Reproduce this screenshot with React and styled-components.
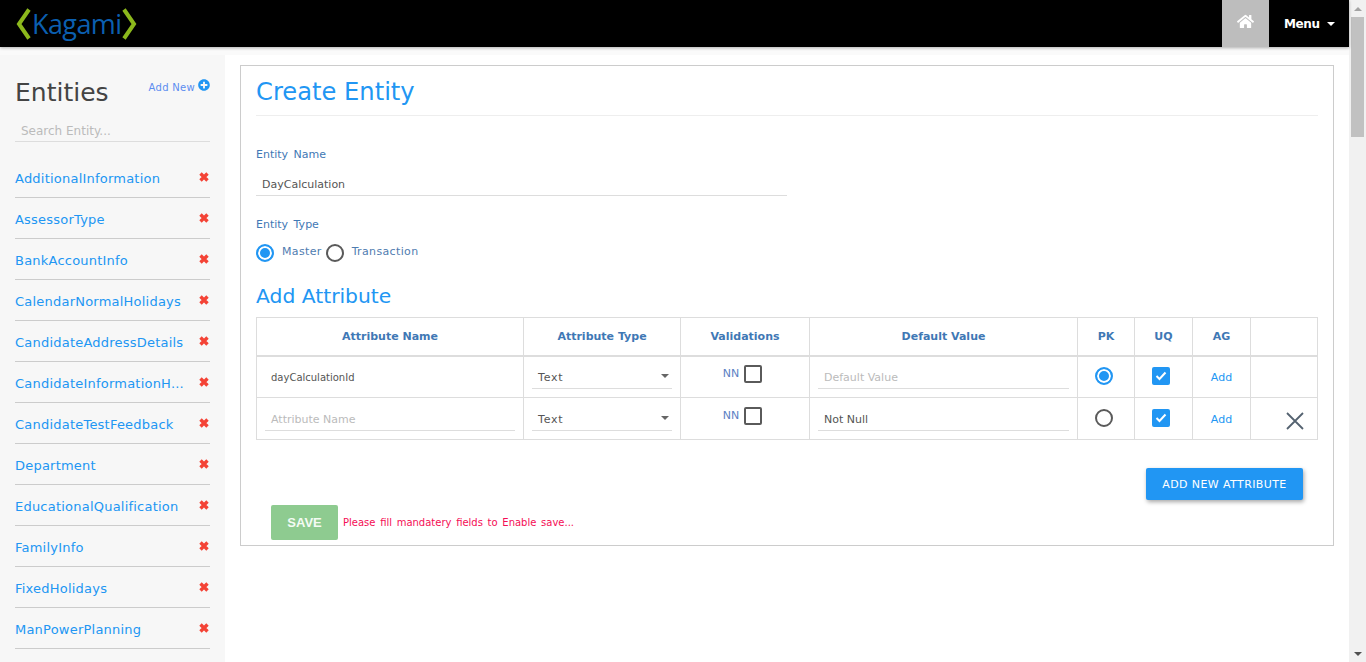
import React from 'react'
import styled, { createGlobalStyle } from 'styled-components'
import { FaHome, FaPlusCircle } from 'react-icons/fa'

const GlobalStyle = createGlobalStyle`
  html, body {
    margin: 0;
    padding: 0;
    background: #fff;
  }
  body {
    font-family: 'DejaVu Sans', Verdana, sans-serif;
    font-size: 12px;
    color: #555;
  }
  * {
    box-sizing: border-box;
  }
`

const Shell = styled.div`
  display: flex;
  height: 100vh;
  overflow: hidden;
`

const Viewport = styled.div`
  flex: 1;
  min-width: 0;
  display: flex;
  flex-direction: column;
`

const ScrollRail = styled.div`
  width: 17px;
  flex-shrink: 0;
  background: #f1f1f1;
  display: flex;
  flex-direction: column;
  justify-content: space-between;
  align-items: center;
`

const ScrollArrow = styled.div`
  height: 17px;
  display: flex;
  align-items: center;
  justify-content: center;

  &::after {
    content: '';
    border-left: 4px solid transparent;
    border-right: 4px solid transparent;
    border-${(p) => (p.$down ? 'top' : 'bottom')}: 4px solid ${(p) => (p.$down ? '#505050' : '#a3a3a3')};
  }
`

const ScrollThumb = styled.div`
  width: 13px;
  height: 120px;
  background: #c1c1c1;
  margin-bottom: auto;
`

const TopBar = styled.header`
  height: 47px;
  flex-shrink: 0;
  background: #000;
  display: flex;
  align-items: stretch;
  justify-content: space-between;
  box-shadow: 0 1px 3px rgba(0, 0, 0, 0.3);
  position: relative;
`

const Logo = styled.div`
  display: flex;
  align-items: center;
  gap: 1px;
  padding-left: 16px;
  color: #0b5fb0;
  font-family: 'Open Sans', sans-serif;
  font-weight: 500;
  font-size: 27px;
  letter-spacing: -0.6px;
`

const TopNav = styled.nav`
  display: flex;
`

const HomeLink = styled.a`
  width: 47px;
  background: #bdbdbd;
  color: #fff;
  display: flex;
  justify-content: center;
  padding-top: 13px;
  font-size: 17px;
`

const MenuLink = styled.a`
  width: 80px;
  color: #fff;
  font-weight: bold;
  font-size: 12px;
  letter-spacing: -0.4px;
  display: flex;
  align-items: center;
  gap: 7px;
  padding-left: 15px;
`

const Caret = styled.span`
  border-left: 4px solid transparent;
  border-right: 4px solid transparent;
  border-top: 4px solid #fff;
`

const Page = styled.div`
  flex: 1;
  display: flex;
  padding-top: 8px;
  background: linear-gradient(#fafafa 8px, #fff 8px);
`

const Sidebar = styled.aside`
  width: 225px;
  flex-shrink: 0;
  background: #f7f7f7;
  padding: 0 15px;
`

const SideHead = styled.div`
  display: flex;
  justify-content: space-between;
  height: 60px;
  padding-top: 20px;
`

const SideTitle = styled.h2`
  margin: 1px 0 0;
  font-size: 25px;
  line-height: 34px;
  font-weight: normal;
  color: #444;
`

const AddNew = styled.a`
  display: flex;
  gap: 3px;
  color: #5c8df0;
  font-size: 10px;
  line-height: 18px;
  margin-top: 4px;
  letter-spacing: 0.3px;

  svg {
    color: #2196f3;
    font-size: 12px;
  }
`

const SearchBox = styled.input`
  display: block;
  width: 100%;
  height: 27px;
  border: 0;
  border-bottom: 1px solid #ddd;
  background: transparent;
  padding: 5px 6px 0;
  font: 12px 'DejaVu Sans', sans-serif;
  outline: none;

  &::placeholder {
    color: #bbb;
    opacity: 1;
  }
`

const EntityList = styled.ul`
  list-style: none;
  margin: 15px 0 0;
  padding: 0;
`

const EntityRow = styled.li`
  height: 41px;
  border-bottom: 1px solid #ccc;
  display: flex;
  align-items: center;
  justify-content: space-between;
  color: #2196f3;
  font-size: 13px;
  letter-spacing: 0.22px;
  padding-top: 3px;

  svg {
    margin-top: -3px;
  }
`

const Main = styled.main`
  flex: 1;
  min-width: 0;
  padding: 10px 15px 0;
`

const Card = styled.section`
  height: 481px;
  border: 1px solid #ccc;
  padding: 0 15px;
`

const Title = styled.h1`
  margin: 0;
  height: 50px;
  border-bottom: 1px solid #eee;
  padding-top: 9px;
  font-size: 24.2px;
  line-height: 34px;
  font-weight: normal;
  color: #2196f3;
`

const FieldLabel = styled.label`
  display: block;
  color: #3f78b5;
  font-size: 11px;
  line-height: 14px;
  margin-top: ${(p) => p.$top}px;
  word-spacing: 2px;
`

const NameInput = styled.div`
  width: 531px;
  height: 24px;
  margin-top: 10px;
  padding-left: 6px;
  border-bottom: 1px solid #ddd;
  font-size: 11px;
  line-height: 25px;
  color: #555;
`

const RadioRow = styled.div`
  display: flex;
  align-items: center;
  height: 20px;
  margin-top: 11px;
`

const RadioText = styled.span`
  color: #4f7cb0;
  font-size: 11px;
  letter-spacing: 0.35px;
  margin: -4px 4px 0 8px;
`

const Radio = styled.span`
  display: inline-block;
  width: 18px;
  height: 18px;
  border-radius: 50%;
  border: 2px solid ${(p) => (p.$on ? '#2196f3' : '#5a5a5a')};
  background: ${(p) => (p.$on ? '#2196f3' : '#fff')};
  box-shadow: ${(p) => (p.$on ? 'inset 0 0 0 2px #fff' : 'none')};
`

const SubTitle = styled.h3`
  margin: 19px 0 0;
  font-size: 20.3px;
  line-height: 28px;
  font-weight: normal;
  color: #2196f3;
`

const Table = styled.table`
  width: 1061px;
  margin-top: 7px;
  border-collapse: collapse;
  table-layout: fixed;
`

const Th = styled.th`
  height: 38px;
  border: 1px solid #ddd;
  border-bottom-width: 2px;
  color: #3f78b5;
  font-size: 11px;
  font-weight: bold;
  text-align: center;
  padding: 0;
`

const Td = styled.td`
  height: 42px;
  border: 1px solid #ddd;
  padding: 0;
  text-align: ${(p) => p.$align || 'center'};
  vertical-align: middle;
  position: relative;
`

const PlainName = styled.span`
  padding-left: 14px;
  font-size: 10px;
  color: #555;
`

const CellInput = styled.div`
  height: 25px;
  margin: 0 8px;
  padding-left: 6px;
  border-bottom: 1px solid #ddd;
  font-size: 11px;
  line-height: 27px;
  text-align: left;
  color: ${(p) => (p.$muted ? '#bbb' : '#555')};
`

const SelectBox = styled(CellInput)`
  display: flex;
  align-items: center;
  justify-content: space-between;
  padding-top: 2px;
  padding-right: 3px;
  letter-spacing: 0.8px;

  &::after {
    content: '';
    margin-top: -2px;
    border-left: 4px solid transparent;
    border-right: 4px solid transparent;
    border-top: 4px solid #666;
  }
`

const NNWrap = styled.div`
  display: flex;
  justify-content: center;
  align-items: flex-start;
  gap: 5px;
  color: #5c7fc4;
  font-size: 11px;
  line-height: 18px;
  margin-top: -6px;
  padding-right: 5px;
`

const Mark = styled.div`
  display: flex;
  justify-content: center;
  margin-top: -2px;
  padding-right: ${(p) => p.$shift}px;
`

const Check = styled.span`
  display: inline-flex;
  align-items: center;
  justify-content: center;
  width: 18px;
  height: 18px;
  flex-shrink: 0;
  border-radius: 2px;
  border: ${(p) => (p.$on ? '0' : '2px solid #5a5a5a')};
  background: ${(p) => (p.$on ? '#2196f3' : '#fff')};
`

const AddLink = styled.a`
  color: #2196f3;
  font-size: 11px;
`

const CloseIcon = styled.svg`
  position: absolute;
  right: 13px;
  top: 14px;
`

const ActionRow = styled.div`
  display: flex;
  justify-content: flex-end;
  padding-right: 15px;
  margin-top: 28px;
`

const AddButton = styled.button`
  width: 157px;
  height: 32px;
  border: 0;
  border-radius: 2px;
  background: #2196f3;
  color: #fff;
  font: 11px 'DejaVu Sans', sans-serif;
  letter-spacing: 0.4px;
  box-shadow: 1px 2px 4px rgba(0, 0, 0, 0.35);
`

const SaveRow = styled.div`
  display: flex;
  align-items: center;
  gap: 5px;
  padding-left: 15px;
  margin-top: 5px;
`

const SaveButton = styled.button`
  width: 67px;
  height: 35px;
  border: 0;
  border-radius: 2px;
  background: #8ecb90;
  color: #f4fbf4;
  font: bold 13px 'Liberation Sans', sans-serif;
`

const SaveHint = styled.span`
  color: #f50d55;
  font-size: 10px;
  word-spacing: 1.5px;
  margin-top: -1px;
`

const entities = [
  'AdditionalInformation',
  'AssessorType',
  'BankAccountInfo',
  'CalendarNormalHolidays',
  'CandidateAddressDetails',
  'CandidateInformationH...',
  'CandidateTestFeedback',
  'Department',
  'EducationalQualification',
  'FamilyInfo',
  'FixedHolidays',
  'ManPowerPlanning',
]

const columns = [
  ['Attribute Name', 267],
  ['Attribute Type', 157],
  ['Validations', 129],
  ['Default Value', 268],
  ['PK', 57],
  ['UQ', 58],
  ['AG', 58],
  ['', 67],
]

const Tick = () => (
  <svg width="12" height="10" viewBox="0 0 12 10">
    <path d="M1.5 5l3 3 6-6.5" fill="none" stroke="#fff" strokeWidth="2" />
  </svg>
)

const RemoveIcon = () => (
  <svg width="12" height="12" viewBox="0 0 12 12">
    <path d="M2.5 2.5l7 7M9.5 2.5l-7 7" stroke="#f44336" strokeWidth="3.4" />
  </svg>
)

const App = () => (
  <Shell>
    <GlobalStyle />
    <Viewport>
      <TopBar>
        <Logo>
          <svg width="15" height="32" viewBox="0 0 15 32">
            <path d="M13 1.5L3 16l10 14.5" fill="none" stroke="#8cb81c" strokeWidth="4" />
          </svg>
          <span>Kagami</span>
          <svg width="15" height="32" viewBox="0 0 15 32">
            <path d="M2 1.5L12 16 2 30.5" fill="none" stroke="#8cb81c" strokeWidth="4" />
          </svg>
        </Logo>
        <TopNav>
          <HomeLink>
            <FaHome />
          </HomeLink>
          <MenuLink>
            Menu <Caret />
          </MenuLink>
        </TopNav>
      </TopBar>
      <Page>
        <Sidebar>
          <SideHead>
            <SideTitle>Entities</SideTitle>
            <AddNew>
              Add New <FaPlusCircle />
            </AddNew>
          </SideHead>
          <SearchBox placeholder="Search Entity..." />
          <EntityList>
            {entities.map((name) => (
              <EntityRow key={name}>
                {name}
                <RemoveIcon />
              </EntityRow>
            ))}
          </EntityList>
        </Sidebar>
        <Main>
          <Card>
            <Title>Create Entity</Title>
            <FieldLabel $top={32}>Entity Name</FieldLabel>
            <NameInput>DayCalculation</NameInput>
            <FieldLabel $top={22}>Entity Type</FieldLabel>
            <RadioRow>
              <Radio $on />
              <RadioText>Master</RadioText>
              <Radio />
              <RadioText>Transaction</RadioText>
            </RadioRow>
            <SubTitle>Add Attribute</SubTitle>
            <Table>
              <colgroup>
                {columns.map(([name, width]) => (
                  <col key={name} style={{ width }} />
                ))}
              </colgroup>
              <thead>
                <tr>
                  {columns.map(([name]) => (
                    <Th key={name}>{name}</Th>
                  ))}
                </tr>
              </thead>
              <tbody>
                <tr>
                  <Td $align="left">
                    <PlainName>dayCalculationId</PlainName>
                  </Td>
                  <Td>
                    <SelectBox>Text</SelectBox>
                  </Td>
                  <Td>
                    <NNWrap>
                      NN <Check />
                    </NNWrap>
                  </Td>
                  <Td>
                    <CellInput $muted>Default Value</CellInput>
                  </Td>
                  <Td>
                    <Mark $shift={5}>
                      <Radio $on />
                    </Mark>
                  </Td>
                  <Td>
                    <Mark $shift={6}>
                      <Check $on>
                        <Tick />
                      </Check>
                    </Mark>
                  </Td>
                  <Td>
                    <AddLink>Add</AddLink>
                  </Td>
                  <Td />
                </tr>
                <tr>
                  <Td>
                    <CellInput $muted>Attribute Name</CellInput>
                  </Td>
                  <Td>
                    <SelectBox>Text</SelectBox>
                  </Td>
                  <Td>
                    <NNWrap>
                      NN <Check />
                    </NNWrap>
                  </Td>
                  <Td>
                    <CellInput>Not Null</CellInput>
                  </Td>
                  <Td>
                    <Mark $shift={5}>
                      <Radio />
                    </Mark>
                  </Td>
                  <Td>
                    <Mark $shift={6}>
                      <Check $on>
                        <Tick />
                      </Check>
                    </Mark>
                  </Td>
                  <Td>
                    <AddLink>Add</AddLink>
                  </Td>
                  <Td>
                    <CloseIcon width="18" height="18" viewBox="0 0 18 18">
                      <path d="M1 1l16 16M17 1L1 17" stroke="#546270" strokeWidth="1.8" />
                    </CloseIcon>
                  </Td>
                </tr>
              </tbody>
            </Table>
            <ActionRow>
              <AddButton>ADD NEW ATTRIBUTE</AddButton>
            </ActionRow>
            <SaveRow>
              <SaveButton>SAVE</SaveButton>
              <SaveHint>Please fill mandatery fields to Enable save...</SaveHint>
            </SaveRow>
          </Card>
        </Main>
      </Page>
    </Viewport>
    <ScrollRail>
      <ScrollArrow />
      <ScrollThumb />
      <ScrollArrow $down />
    </ScrollRail>
  </Shell>
)

export default App
